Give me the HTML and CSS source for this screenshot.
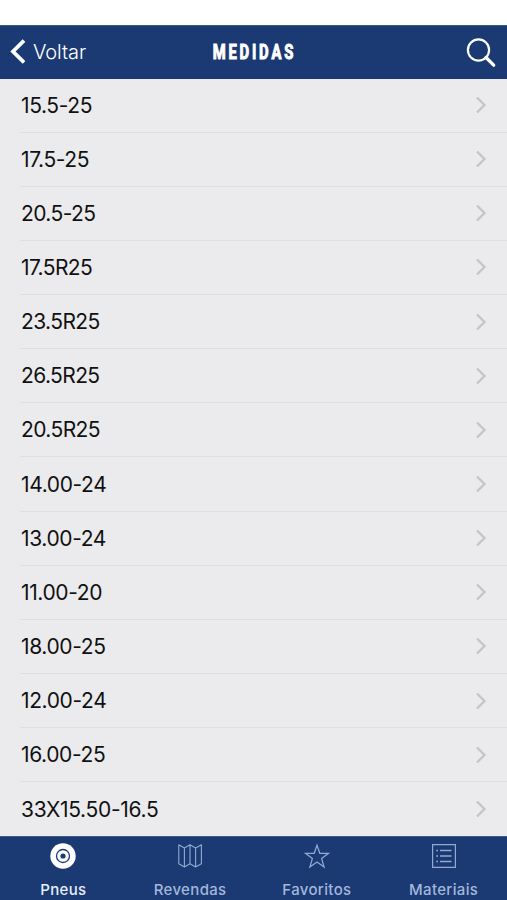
FILE: index.html
```html
<!DOCTYPE html>
<html lang="pt">
<head>
<meta charset="utf-8">
<title>Medidas</title>
<link rel="stylesheet" href="styles.css">
</head>
<body>
<svg width="0" height="0" class="defs"><defs><symbol id="chevron" viewBox="0 0 12 18"><path d="M2 1.5 9.5 9 2 16.5" fill="none" stroke="#c5c5c9" stroke-width="2.3"/></symbol></defs></svg>
<div class="status"></div>
<header class="navbar">
  <a class="back"><svg width="17" height="27" viewBox="0 0 17 27"><path d="M16 2.5 5 13.5 16 24.5" fill="none" stroke="#fff" stroke-width="3.8"/></svg><span>Voltar</span></a>
  <h1>MEDIDAS</h1>
  <svg class="search" width="32" height="32" viewBox="0 0 32 32" fill="none" stroke="#fff"><circle cx="13.5" cy="13" r="10.6" stroke-width="2.2"/><path d="M21 20.5 28.7 28.2" stroke-width="3.3" stroke-linecap="round"/></svg>
</header>
<ul class="list">
  <li><span>15.5-25</span><svg><use href="#chevron"/></svg></li>
  <li><span>17.5-25</span><svg><use href="#chevron"/></svg></li>
  <li class="tight"><span>20.5-25</span><svg><use href="#chevron"/></svg></li>
  <li class="tight"><span>17.5R25</span><svg><use href="#chevron"/></svg></li>
  <li class="tight"><span>23.5R25</span><svg><use href="#chevron"/></svg></li>
  <li class="tight"><span>26.5R25</span><svg><use href="#chevron"/></svg></li>
  <li class="tight"><span>20.5R25</span><svg><use href="#chevron"/></svg></li>
  <li><span>14.00-24</span><svg><use href="#chevron"/></svg></li>
  <li><span>13.00-24</span><svg><use href="#chevron"/></svg></li>
  <li><span>11.00-20</span><svg><use href="#chevron"/></svg></li>
  <li><span>18.00-25</span><svg><use href="#chevron"/></svg></li>
  <li><span>12.00-24</span><svg><use href="#chevron"/></svg></li>
  <li><span>16.00-25</span><svg><use href="#chevron"/></svg></li>
  <li><span>33X15.50-16.5</span><svg><use href="#chevron"/></svg></li>
</ul>
<nav class="tabs">
  <a class="active"><svg viewBox="0 0 28 28" fill="none"><circle cx="14" cy="14" r="12.7" fill="#fff"/><circle cx="14" cy="14" r="6.5" stroke="#1b3a73" stroke-width="1.3"/><circle cx="14" cy="14" r="2.6" fill="#1b3a73"/></svg><span>Pneus</span></a>
  <a><svg viewBox="0 0 28 28" fill="none" stroke="#91a9d3" stroke-width="1.1" stroke-linejoin="round"><path d="M2.8 2.8 8.4 6l5.6-3.2L19.6 6l5.8-3.2v18.9l-5.8 3.2-5.6-3.2-5.6 3.2-5.6-3.2ZM8.4 6v18.9M14 2.8v18.9M19.6 6v18.9"/></svg><span>Revendas</span></a>
  <a><svg viewBox="0 0 28 28" fill="none" stroke="#91a9d3" stroke-width="1.2"><path d="M14 3.2 16.8 11.3H25.5L18.6 16.5 21.1 25 14 20 6.9 25 9.4 16.5 2.5 11.3H11.2Z"/></svg><span>Favoritos</span></a>
  <a><svg viewBox="0 0 28 28" fill="none" stroke="#91a9d3" stroke-width="1.2"><path d="M2.6 2.6H25.4V25.4H2.6Z"/><path d="M10 8.5H21.5M10 14H21.5M10 19.5H21.5M6.3 8.5H8M6.3 14H8M6.3 19.5H8" stroke-width="1.4"/></svg><span>Materiais</span></a>
</nav>
</body>
</html>
```
FILE: styles.css
```css
* { box-sizing: border-box; }
body { margin: 0; height: 900px; display: flex; flex-direction: column; overflow: hidden; background: #ebebed; font-family: Inter, "Liberation Sans", sans-serif; }
.defs { position: absolute; }
.status { height: 25px; flex: none; background: #fff; }
.navbar { height: 54px; flex: none; display: grid; grid-template-columns: 1fr auto 1fr; align-items: center; padding: 0 10px 2px 8px; background: #1b3a73; border-top: 1px solid #3c5887; color: #fff; }
.back { display: flex; align-items: center; gap: 8px; font-size: 20px; font-weight: 300; line-height: 26px; letter-spacing: -0.1px; }
.navbar h1 { margin: 0; font: 700 20px/26px Roboto, sans-serif; letter-spacing: 3.8px; text-indent: 5px; width: 85px; display: flex; justify-content: center; transform: scaleX(.74); -webkit-text-stroke: 1px #fff; }
.search { justify-self: end; margin-top: 2px; }
.list { list-style: none; margin: 0; padding: 0 0 0 20px; height: 757px; flex: none; display: flex; flex-direction: column; }
.list li { height: 54.15px; flex: none; display: flex; justify-content: space-between; align-items: center; padding: 0 20px 0 1px; border-bottom: 1px solid #dfdfe2; color: #111; font-size: 21px; letter-spacing: -0.38px; }
.list li:first-child { height: 53.6px; }
.list .tight { letter-spacing: -0.6px; }
.list li:last-child { border: 0; letter-spacing: -0.3px; }
.list svg { width: 12px; height: 18px; }
.tabs { flex: 1; display: grid; grid-template-columns: repeat(4, 1fr); background: #1b3a73; border-top: 1px solid #3c5887; }
.tabs a { display: flex; flex-direction: column; align-items: center; color: #a2b7dc; font-size: 15px; font-weight: 500; line-height: 18px; letter-spacing: .35px; padding-top: 5px; }
.tabs svg { width: 28px; height: 28px; margin-bottom: 11px; flex: none; }
.tabs .active { color: #e6eefb; }
```
